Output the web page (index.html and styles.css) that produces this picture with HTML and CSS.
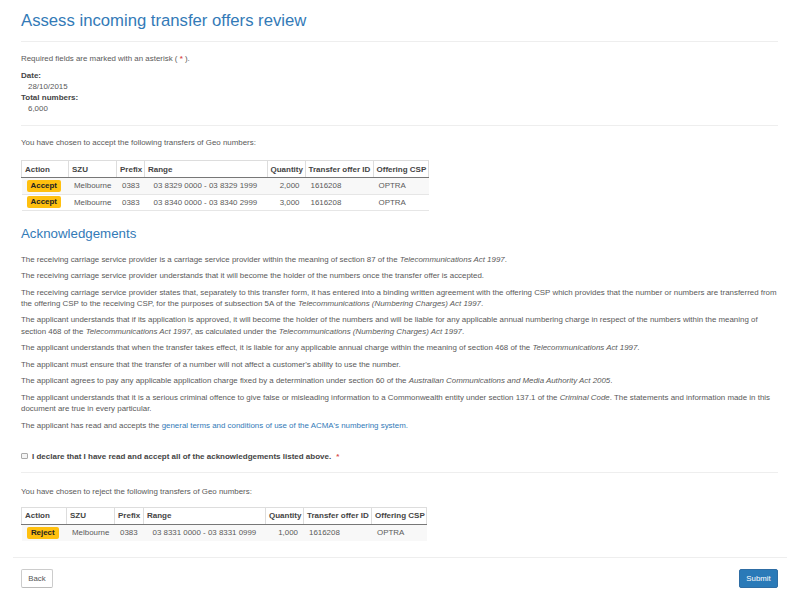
FILE: index.html
```html
<!DOCTYPE html>
<html>
  <head>
    <title>Assess incoming transfer offers review</title>
    <link rel="stylesheet" href="styles.css">
  </head>
  <body>
    <div class="container">
      <h1>Assess incoming transfer offers review</h1>
      <hr class="title-rule" />
      <p class="required">Required fields are marked with an asterisk ( <span class="star">*</span> ).</p>
      <dl>
        <dt>Date:</dt>
        <dd>28/10/2015</dd>
        <dt>Total numbers:</dt>
        <dd>6,000</dd>
      </dl>
      <hr class="summary-rule" />
      <p class="intro">You have chosen to accept the following transfers of Geo numbers:</p>
      <table class="accept-table">
        <thead>
          <tr>
            <th class="col-action">Action</th>
            <th class="col-szu">SZU</th>
            <th class="col-prefix">Prefix</th>
            <th class="col-range">Range</th>
            <th class="col-qty">Quantity</th>
            <th class="col-offer">Transfer offer ID</th>
            <th class="col-csp">Offering CSP</th>
          </tr>
        </thead>
        <tbody>
          <tr class="odd">
            <td><span class="badge">Accept</span></td>
            <td class="indent">Melbourne</td>
            <td class="indent">0383</td>
            <td class="range">03 8329 0000 - 03 8329 1999</td>
            <td class="qty">2,000</td>
            <td class="indent">1616208</td>
            <td class="indent">OPTRA</td>
          </tr>
          <tr>
            <td><span class="badge">Accept</span></td>
            <td class="indent">Melbourne</td>
            <td class="indent">0383</td>
            <td class="range">03 8340 0000 - 03 8340 2999</td>
            <td class="qty">3,000</td>
            <td class="indent">1616208</td>
            <td class="indent">OPTRA</td>
          </tr>
        </tbody>
      </table>
      <h2>Acknowledgements</h2>
      <div class="terms">
        <p>The receiving carriage service provider is a carriage service provider within the meaning of section 87 of the <em>Telecommunications Act 1997</em>.</p>
        <p>The receiving carriage service provider understands that it will become the holder of the numbers once the transfer offer is accepted.</p>
        <p>The receiving carriage service provider states that, separately to this transfer form, it has entered into a binding written agreement with the offering CSP which provides that the number or numbers are transferred from the offering CSP to the receiving CSP, for the purposes of subsection 5A of the <em>Telecommunications (Numbering Charges) Act 1997</em>.</p>
        <p>The applicant understands that if its application is approved, it will become the holder of the numbers and will be liable for any applicable annual numbering charge in respect of the numbers within the meaning of section 468 of the <em>Telecommunications Act 1997</em>, as calculated under the <em>Telecommunications (Numbering Charges) Act 1997</em>.</p>
        <p>The applicant understands that when the transfer takes effect, it is liable for any applicable annual charge within the meaning of section 468 of the <em>Telecommunications Act 1997</em>.</p>
        <p>The applicant must ensure that the transfer of a number will not affect a customer's ability to use the number.</p>
        <p>The applicant agrees to pay any applicable application charge fixed by a determination under section 60 of the <em>Australian Communications and Media Authority Act 2005</em>.</p>
        <p>The applicant understands that it is a serious criminal offence to give false or misleading information to a Commonwealth entity under section 137.1 of the <em>Criminal Code</em>. The statements and information made in this document are true in every particular.</p>
        <p>The applicant has read and accepts the <a href="#">general terms and conditions of use of the ACMA's numbering system.</a></p>
      </div>
      <div class="declare">
        <input type="checkbox" id="declare" />
        <label for="declare">I declare that I have read and accept all of the acknowledgements listed above.</label>
        <span class="star">*</span>
      </div>
      <hr class="declare-rule" />
      <p class="intro intro-reject">You have chosen to reject the following transfers of Geo numbers:</p>
      <table class="reject-table">
        <thead>
          <tr>
            <th class="col-action">Action</th>
            <th class="col-szu">SZU</th>
            <th class="col-prefix">Prefix</th>
            <th class="col-range">Range</th>
            <th class="col-qty">Quantity</th>
            <th class="col-offer">Transfer offer ID</th>
            <th class="col-csp">Offering CSP</th>
          </tr>
        </thead>
        <tbody>
          <tr class="odd">
            <td><span class="badge">Reject</span></td>
            <td class="indent">Melbourne</td>
            <td class="indent">0383</td>
            <td class="range">03 8331 0000 - 03 8331 0999</td>
            <td class="qty">1,000</td>
            <td class="indent">1616208</td>
            <td class="indent">OPTRA</td>
          </tr>
        </tbody>
      </table>
    </div>
    <div class="footer">
      <button class="btn-back">Back</button>
      <button class="btn-submit">Submit</button>
    </div>
  </body>
</html>
```
FILE: styles.css
```css
body {
  margin: 0;
  background-color: #fff;
  color: #5a5a5a;
  font-family: "Liberation Sans", Arial, sans-serif;
  font-size: 7.92px;
  line-height: 11.1px;
}

.container {
  padding: 0 22px 0 21px;
}

h1 {
  margin: 0;
  padding-top: 10px;
  color: #337ab7;
  font-size: 16.7px;
  font-weight: normal;
  line-height: 21px;
}

h2 {
  margin: 15px 0 11.5px;
  color: #337ab7;
  font-size: 13.3px;
  font-weight: normal;
  line-height: 16px;
}

hr {
  height: 1px;
  margin: 0;
  border: none;
  background-color: #eee;
}

.title-rule {
  margin: 10px 0 11px;
}

.summary-rule {
  margin: 11px 0;
}

.declare-rule {
  margin: 10.5px 0 12.5px;
}

p {
  margin: 0 0 5.5px;
}

.required {
  margin-bottom: 6px;
}

.star {
  color: #d9534f;
  font-weight: bold;
}

dl {
  margin: 0;
}

dt {
  color: #444;
  font-size: 8px;
  font-weight: bold;
}

dd {
  margin: 0 0 0 7px;
}

.intro {
  margin-bottom: 0;
  padding-bottom: 11.5px;
}

.intro-reject {
  padding-bottom: 10px;
}

table {
  border-collapse: collapse;
  table-layout: fixed;
}

.accept-table {
  width: 407px;
}

.reject-table {
  width: 405px;
}

th {
  box-sizing: border-box;
  height: 17px;
  padding: 0 3px;
  border: 1px solid #ddd;
  border-bottom: 1px solid #777;
  border-left: none;
  color: #444;
  font-size: 8px;
  font-weight: bold;
  text-align: left;
  white-space: nowrap;
}

th:first-child {
  border-left: 1px solid #ddd;
}

td {
  box-sizing: border-box;
  height: 16.5px;
  padding: 0 3px;
  border-bottom: 1px solid #e6e6e6;
  white-space: nowrap;
}

.reject-table td {
  border-bottom: none;
}

.odd td {
  background-color: #f8f8f8;
}

.accept-table .col-action { width: 47px; }
.accept-table .col-szu { width: 48px; }
.accept-table .col-prefix { width: 28px; }
.accept-table .col-range { width: 122.5px; }
.accept-table .col-qty { width: 38px; }
.accept-table .col-offer { width: 68px; }
.accept-table .col-csp { width: 55.5px; }

.reject-table .col-action { width: 45px; }
.reject-table .col-szu { width: 48px; }
.reject-table .col-prefix { width: 29px; }
.reject-table .col-range { width: 122px; }
.reject-table .col-qty { width: 38px; }
.reject-table .col-offer { width: 68px; }
.reject-table .col-csp { width: 55px; }

.indent {
  padding-left: 5.5px;
}

.range {
  padding-left: 9px;
}

.qty {
  padding-right: 5.5px;
  text-align: right;
}

.badge {
  display: block;
  width: 34.5px;
  margin-left: 2px;
  border-radius: 2px;
  background-color: #ffc00f;
  color: #222;
  font-weight: bold;
  line-height: 12px;
  text-align: center;
}

.reject-table .badge {
  width: 32.5px;
}

a {
  color: #337ab7;
  text-decoration: none;
}

.declare {
  display: flex;
  align-items: center;
  margin-top: 20px;
}

.declare input {
  appearance: none;
  box-sizing: border-box;
  width: 6.5px;
  height: 6.5px;
  margin: 0 4.5px 0 0;
  border: 1px solid #aaa;
  border-radius: 1px;
  background-color: #f4f4f4;
}

.declare label {
  color: #444;
  font-size: 8px;
  font-weight: bold;
}

.declare .star {
  margin-left: 5px;
}

.footer {
  display: flex;
  justify-content: space-between;
  margin: 16px 13px 0;
  padding: 11.5px 9px 0 8px;
  border-top: 1px solid #eee;
}

button {
  box-sizing: border-box;
  height: 19px;
  padding: 0;
  border-radius: 2px;
  font-family: "Liberation Sans", Arial, sans-serif;
  font-size: 7.8px;
}

.btn-back {
  width: 32px;
  border: 1px solid #ccc;
  border-bottom-color: #bbb;
  background-color: #fff;
  color: #555;
}

.btn-submit {
  width: 39px;
  border: 1px solid #2e6da4;
  background-color: #2a7ab8;
  color: #fff;
}
```
